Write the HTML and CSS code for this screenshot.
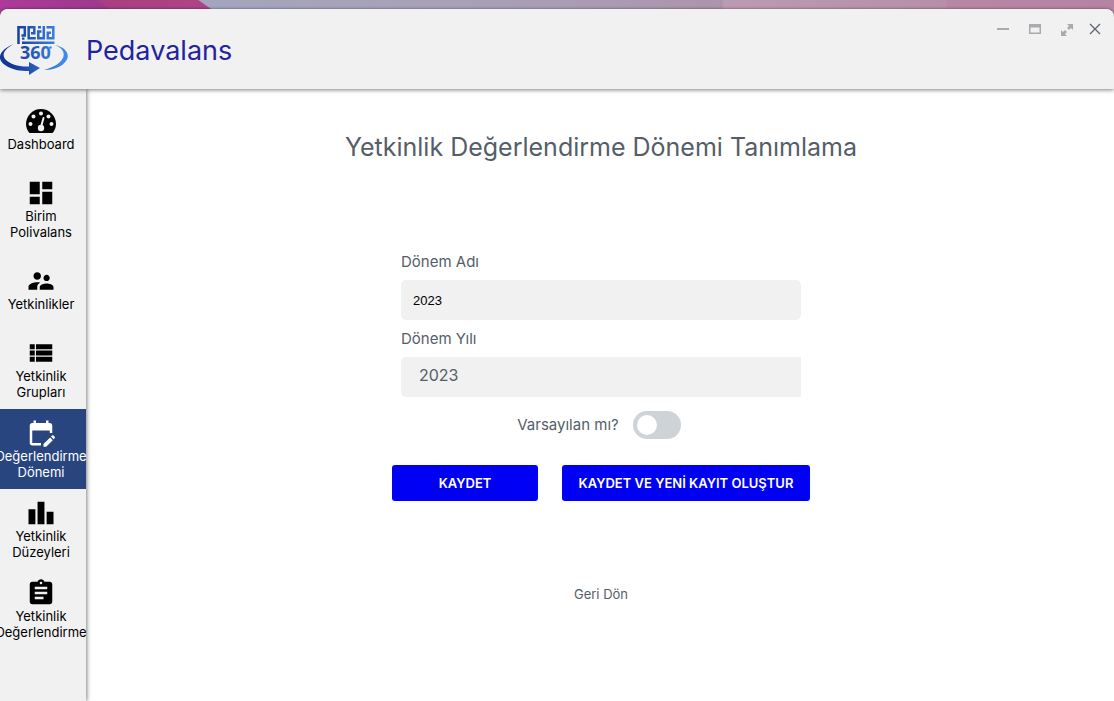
FILE: index.html
```html
<!DOCTYPE html>
<html lang="tr">
<head>
<meta charset="utf-8">
<title>Pedavalans</title>
<link rel="stylesheet" href="styles.css">
</head>
<body>
<div class="window">
  <header class="titlebar">
    <svg class="logo" viewBox="0 0 68 52" role="img" aria-label="Peda 360">
      <defs>
        <linearGradient id="blue" gradientUnits="userSpaceOnUse" x1="0" y1="0" x2="68" y2="0">
          <stop offset="0.2" stop-color="#14389a"/><stop offset="0.9" stop-color="#3f8ae8"/>
        </linearGradient>
      </defs>
      <g fill="none" stroke="url(#blue)" stroke-width="2.500">
        <path d="M18.500 19V2.200H24.800V10.500H21.500"/>
        <path d="M35.800 13.200H28.700V2.200H34.300V8.300H31"/>
        <path d="M43.800 1V13.200H38.300V6.500H41.500"/>
        <path d="M46.500 2.200H53.300V13.200H47.800V7.700H51"/>
        <path d="M22 17.700H54.500"/>
      </g>
      <path fill="url(#blue)" d="M22 12.500H24.500V14.800H22ZM38 1H41V3.500H38Z"/>
      <path fill="url(#blue)" d="M14 19C-1 25-4 34 5 40C12 45 20 46 29 46V50L40 43L29 37V41.500C19 42 10 39 6 35C1 30 4 24 14 19Z"/>
      <path fill="url(#blue)" d="M55 20C65 24 66 31 60 37C56 41 50 43 44 45C53 45 62 42 66 36C71 29 65 22 55 20Z"/>
      <text class="logo-number" x="20" y="34">360</text>
      <circle cx="50.500" cy="22.500" r="1.300" fill="#3f8ae8"/>
    </svg>
    <h1 class="app-name">Pedavalans</h1>
    <div class="window-controls">
      <button class="control" aria-label="Küçült"><svg viewBox="0 0 14 14"><path d="M1 7H13" fill="none" stroke="currentColor" stroke-width="2"/></svg></button>
      <button class="control" aria-label="Pencere"><svg viewBox="0 0 14 14"><path fill="currentColor" fill-rule="evenodd" d="M1 2H13V12H1ZM2.500 5.500V10.500H11.500V5.500Z"/></svg></button>
      <button class="control" aria-label="Büyüt"><svg viewBox="0 0 14 14"><path fill="currentColor" d="M7 2H13V8L11 6L9 8L7 6L9 4ZM1 8L3 10L5 8L7 10L5 12L7 14H1Z"/></svg></button>
      <button class="control control-close" aria-label="Kapat"><svg viewBox="0 0 14 14"><path d="M2 2L12 12M12 2L2 12" fill="none" stroke="currentColor" stroke-width="1.300"/></svg></button>
    </div>
  </header>
  <div class="body">
    <nav class="sidebar">
      <a class="nav-item" href="#">
        <svg class="icon" viewBox="0 0 30 30"><path d="M3.500 27C1.500 25 0 21.500 0 18A15 15 0 0 1 30 18C30 21.500 28.500 25 26.500 27Z"/><g fill="#f1f1f1"><circle cx="4.500" cy="18" r="2"/><circle cx="7.500" cy="10.500" r="2"/><circle cx="15" cy="7.500" r="2"/><circle cx="22.500" cy="10.500" r="2"/><circle cx="25.500" cy="18" r="2"/><circle cx="15" cy="22" r="3.200"/></g><path d="M15 21L17.500 12" stroke="#f1f1f1" stroke-width="2" stroke-linecap="round"/></svg>
        <span>Dashboard</span>
      </a>
      <a class="nav-item" href="#">
        <svg class="icon" viewBox="0 0 24 24"><path d="M3 13h8V3H3v10zm0 8h8v-6H3v6zm10 0h8V11h-8v10zm0-18v6h8V3h-8z"/></svg>
        <span>Birim<br>Polivalans</span>
      </a>
      <a class="nav-item" href="#">
        <svg class="icon" viewBox="0 0 24 24"><path d="M16.500 12c1.380 0 2.490-1.120 2.490-2.500S17.880 7 16.500 7 14 8.120 14 9.500s1.120 2.500 2.500 2.500zM9 11c1.660 0 2.990-1.340 2.990-3S10.660 5 9 5 6 6.340 6 8s1.340 3 3 3zm7.500 3c-1.830 0-5.500.920-5.500 2.750V19h11v-2.250c0-1.830-3.670-2.750-5.500-2.750zM9 13c-2.330 0-7 1.170-7 3.500V19h7v-2.250c0-.850.330-2.340 2.370-3.470C10.500 13.100 9.660 13 9 13z"/></svg>
        <span>Yetkinlikler</span>
      </a>
      <a class="nav-item" href="#">
        <svg class="icon" viewBox="0 0 24 24"><path d="M3 14h4v-4H3v4zm0 5h4v-4H3v4zM3 9h4V5H3v4zm5 5h13v-4H8v4zm0 5h13v-4H8v4zM8 5v4h13V5H8z"/></svg>
        <span>Yetkinlik<br>Grupları</span>
      </a>
      <a class="nav-item nav-item-active" href="#" aria-current="page">
        <svg class="icon" viewBox="0 0 24 24"><path d="M12 22H5c-1.110 0-2-.900-2-2L3.010 6c0-1.100.880-2 1.990-2h1V2h2v2h8V2h2v2h1c1.100 0 2 .900 2 2v6h-2v-2H5v10h7v2zm10.130-5.010.710-.710c.390-.390.390-1.020 0-1.410l-.710-.710c-.390-.390-1.020-.390-1.410 0l-.710.710 2.120 2.120zm-.710.710-5.300 5.300H14v-2.120l5.300-5.300 2.120 2.120z"/></svg>
        <span>Değerlendirme<br>Dönemi</span>
      </a>
      <a class="nav-item" href="#">
        <svg class="icon" viewBox="0 0 24 24"><path d="M2 9h5.500v12H2zM9.250 3h5.500v18h-5.500zM16.500 11H22v10h-5.500z"/></svg>
        <span>Yetkinlik<br>Düzeyleri</span>
      </a>
      <a class="nav-item" href="#">
        <svg class="icon" viewBox="0 0 24 24"><path d="M19 3h-4.180C14.400 1.840 13.300 1 12 1c-1.300 0-2.400.840-2.820 2H5c-1.100 0-2 .900-2 2v14c0 1.100.900 2 2 2h14c1.100 0 2-.900 2-2V5c0-1.100-.900-2-2-2zm-7 0c.550 0 1 .450 1 1s-.450 1-1 1-1-.450-1-1 .450-1 1-1zm2 14H7v-2h7v2zm3-4H7v-2h10v2zm0-4H7V7h10v2z"/></svg>
        <span>Yetkinlik<br>Değerlendirme</span>
      </a>
    </nav>
    <main class="content">
      <h2 class="page-title">Yetkinlik Değerlendirme Dönemi Tanımlama</h2>
      <form class="form">
        <label class="label" for="name">Dönem Adı</label>
        <input class="field" id="name" type="text" value="2023">
        <label class="label" for="year">Dönem Yılı</label>
        <select class="field field-select" id="year"><option>2023</option></select>
        <div class="switch-row">
          <label for="default">Varsayılan mı?</label>
          <input class="switch" id="default" type="checkbox">
        </div>
      </form>
      <div class="actions">
        <button class="button">KAYDET</button>
        <button class="button button-wide">KAYDET VE YENİ KAYIT OLUŞTUR</button>
      </div>
      <a class="back" href="#">Geri Dön</a>
    </main>
  </div>
</div>
</body>
</html>
```
FILE: styles.css
```css
* { box-sizing: border-box; }

body {
  margin: 0;
  min-height: 100vh;
  padding-top: 9px;
  font-family: Inter, "Liberation Sans", sans-serif;
  color: #555e68;
  overflow: hidden;
  background:
    linear-gradient(35deg, #b03a9c 0, #9c3a8e 70px, #a8407f 71px, #ad4585 128px, transparent 129px) 0 0 / 220px 18px no-repeat,
    linear-gradient(90deg, #a5a5bf 209px, #a9a0b6 500px, #ad94ad 722px, #bd9ab4 724px, #b78fab 945px, #b886a6 947px, #b583a4 100%);
}

.window {
  display: flex;
  flex-direction: column;
  height: calc(100vh - 9px);
  border-radius: 8px 8px 0 0;
  overflow: hidden;
  background: #fff;
  box-shadow: 0 0 3px rgba(0, 0, 0, 0.5);
}

.titlebar {
  position: relative;
  z-index: 2;
  display: flex;
  align-items: center;
  flex: none;
  height: 80px;
  padding-top: 3px;
  background: #f1f1f1;
  box-shadow: 0 1px 4px rgba(0, 0, 0, 0.5);
}

.logo { width: 68px; height: 52px; }

.logo-number {
  font: 700 18px "Open Sans", sans-serif;
  fill: url(#blue);
}

.app-name {
  margin: 0 auto 0 18px;
  font-size: 27px;
  font-weight: 400;
  line-height: 36px;
  color: #2323a0;
}

.window-controls {
  display: flex;
  align-self: flex-start;
  gap: 18px;
  padding: 10px 12px 0 0;
}

.control {
  width: 14px;
  height: 14px;
  padding: 0;
  border: 0;
  background: none;
  color: #a7abaf;
}

.control svg { display: block; }
.control-close { margin-left: -4px; color: #5c656e; }

.body { display: flex; flex: 1; min-height: 0; }

.sidebar {
  z-index: 1;
  flex: none;
  width: 86px;
  background: #f1f1f1;
  box-shadow: 1px 0 4px rgba(0, 0, 0, 0.5);
}

.nav-item {
  display: flex;
  flex-direction: column;
  align-items: center;
  justify-content: center;
  height: 80px;
  padding-right: 4px;
  font-size: 13px;
  line-height: 16px;
  text-align: center;
  white-space: nowrap;
  text-decoration: none;
  color: #000;
}

.nav-item-active { background: #294580; color: #fff; }

.icon { width: 30px; height: 30px; fill: currentColor; }

.content {
  display: flex;
  flex-direction: column;
  align-items: center;
  flex: 1;
  padding: 40px 0 0 2px;
}

.page-title {
  margin: 0;
  font-size: 25px;
  font-weight: 400;
  line-height: 36px;
}

.form {
  display: flex;
  flex-direction: column;
  width: 400px;
  margin-top: 85px;
  font-size: 15px;
  font-weight: 400;
  line-height: 24px;
}

.label { margin-bottom: 6px; }

.field {
  height: 40px;
  margin-bottom: 7px;
  padding: 0 12px;
  border: 0;
  border-radius: 5px;
  background: #f1f1f1;
  font: 13px "Liberation Sans", sans-serif;
  color: #000;
}

.field-select {
  appearance: none;
  margin-bottom: 14px;
  padding: 0 18px 4px;
  border-radius: 5px 0 0 5px;
  font: 16px Inter, sans-serif;
  color: #555e68;
}

.switch-row {
  display: flex;
  align-items: center;
  justify-content: center;
  gap: 14px;
  padding-right: 4px;
}

.switch {
  appearance: none;
  display: flex;
  width: 48px;
  height: 28px;
  margin: 0;
  padding: 4px;
  border-radius: 14px;
  background: #ced3d7;
}

.switch::before {
  content: "";
  width: 20px;
  height: 20px;
  border-radius: 50%;
  background: #fff;
}

.actions { display: flex; gap: 24px; margin-top: 26px; }

.button {
  width: 146px;
  height: 36px;
  padding: 0;
  border: 0;
  border-radius: 3px;
  background: #0000f5;
  font: 600 13px Inter, sans-serif;
  color: #fff;
}

.button-wide { width: 248px; }

.back {
  margin-top: 85px;
  font-size: 13px;
  font-weight: 400;
  line-height: 16px;
  text-decoration: none;
  color: #555e68;
}
```
